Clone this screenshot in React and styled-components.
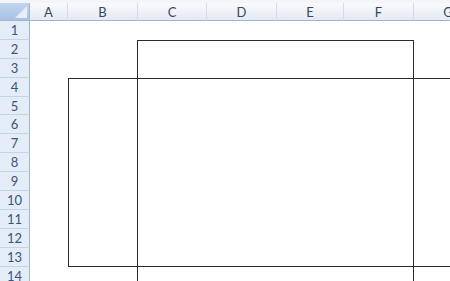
import React from "react";
import styled, { createGlobalStyle } from "styled-components";

const COLS = [
  { label: "A", width: 38 },
  { label: "B", width: 70 },
  { label: "C", width: 69 },
  { label: "D", width: 70 },
  { label: "E", width: 67 },
  { label: "F", width: 70 },
  { label: "G", width: 69 },
];

const ROWS = Array.from({ length: 14 }, (_, i) => i + 1);

const App = () => {
  return (
    <>
      <GlobalStyle />
      <Sheet>
        <TopStrip />
        <Grid>
          <Corner>
            <CornerTriangle />
          </Corner>
          {COLS.map((col) => (
            <ColHeader key={col.label}>{col.label}</ColHeader>
          ))}
          {ROWS.map((row) => (
            <React.Fragment key={row}>
              <RowHeader>{row}</RowHeader>
              {COLS.map((col) => (
                <Cell key={col.label} />
              ))}
            </React.Fragment>
          ))}
        </Grid>
        {/* drawn shapes float over the sheet at their own coordinates */}
        <Shape $left={137} $top={40} $width={277} $height={260} />
        <Shape $left={68} $top={78} $width={400} $height={189} />
      </Sheet>
    </>
  );
};

const GlobalStyle = createGlobalStyle`
  html, body {
    margin: 0;
    padding: 0;
    background: #ffffff;
  }
`;

const Sheet = styled.div`
  position: relative;
  width: 450px;
  height: 281px;
  overflow: hidden;
  background: #ffffff;
  font-family: Lato, "Open Sans", "Liberation Sans", sans-serif;
`;

const TopStrip = styled.div`
  height: 3px;
  background: #f3f5f8;
`;

const Grid = styled.div`
  display: grid;
  grid-template-columns: 30px ${COLS.map((c) => `${c.width}px`).join(" ")};
  grid-template-rows: 18px repeat(14, 18.9px);
`;

const Corner = styled.div`
  position: relative;
  background: linear-gradient(#c3d5ee, #a9c1e4);
  border-right: 1px solid #9eb6ce;
  border-bottom: 1px solid #9eb6ce;
  box-sizing: border-box;
`;

const CornerTriangle = styled.div`
  position: absolute;
  right: 2px;
  bottom: 2px;
  width: 0;
  height: 0;
  border-left: 12px solid transparent;
  border-bottom: 12px solid #e6eef9;
`;

const ColHeader = styled.div`
  display: flex;
  align-items: center;
  justify-content: center;
  box-sizing: border-box;
  background: linear-gradient(#f8fafd, #e4eaf3);
  border-right: 1px solid #d2dbe7;
  border-bottom: 1px solid #9eb6ce;
  color: #3a475a;
  font-size: 13px;
`;

const RowHeader = styled.div`
  display: flex;
  align-items: center;
  justify-content: center;
  box-sizing: border-box;
  background: #e4ecf7;
  border-right: 1px solid #9eb6ce;
  border-bottom: 1px solid #c5d3e4;
  color: #3b5478;
  font-size: 13px;
`;

const Cell = styled.div`
  background: #ffffff;
`;

const Shape = styled.div`
  position: absolute;
  left: ${(p) => p.$left}px;
  top: ${(p) => p.$top}px;
  width: ${(p) => p.$width}px;
  height: ${(p) => p.$height}px;
  border: 1px solid #2a2a2a;
  box-sizing: border-box;
  pointer-events: none;
`;

export default App;
